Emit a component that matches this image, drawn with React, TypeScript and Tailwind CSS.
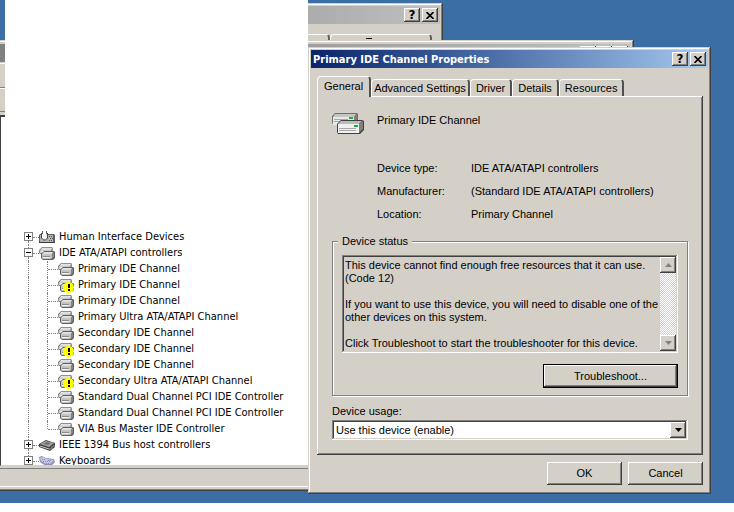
import React from "react";

const windowBevel =
  "bg-[#d4d0c8] shadow-[inset_-1px_-1px_#404040,inset_1px_1px_#d4d0c8,inset_-2px_-2px_#808080,inset_2px_2px_#fff]";
const buttonBevel =
  "bg-[#d4d0c8] shadow-[inset_-1px_-1px_#404040,inset_1px_1px_#fff,inset_-2px_-2px_#808080]";
const sunken =
  "shadow-[inset_-1px_-1px_#fff,inset_1px_1px_#808080,inset_-2px_-2px_#d4d0c8,inset_2px_2px_#404040]";
const tahoma = "font-['DejaVu_Sans_Condensed','DejaVu_Sans',sans-serif]";

function DriveIcon({ warning = false }: { warning?: boolean }) {
  return (
    <svg width="16" height="16" viewBox="0 0 16 16" className="shrink-0 overflow-visible" aria-hidden="true">
      <path d="M2 3l1-1h10l1 1v5l-1 1H1L0 8V5z" fill="#909090" />
      <path d="M3 3h10l-1 2H2z" fill="#e0e0e0" />
      <path d="M1 5h11v3H1z" fill="#c6c6c6" />
      <path d="M2 6.5h3" stroke="#f4f4f4" />
      <path d="M4 7l1-1h10l1 1v6l-2 2H4l-2-2V9z" fill="#606060" />
      <path d="M5 7h9l-1 2H3z" fill="#e0e0e0" />
      <path d="M3 9h10v4l-1 1H4l-1-1z" fill="#c4c4c4" />
      <path d="M13 9l2-2v5l-2 2z" fill="#848484" />
      <path d="M4 11.5h7" stroke="#8c8c8c" />
      <path d="M4 12.500h7" stroke="#f0f0f0" />
      {warning && (
        <g>
          <circle cx="10.500" cy="10.500" r="5.500" fill="#ffff00" />
          <path d="M10 7h2v4h-2zM10 12h2v2h-2z" fill="#000" />
        </g>
      )}
    </svg>
  );
}

function HidIcon() {
  return (
    <svg width="16" height="16" viewBox="0 0 16 16" className="shrink-0" aria-hidden="true">
      <path d="M0 6l1-1h14l1 1v8H0z" fill="#606060" />
      <path d="M1 6h13v7H1z" fill="#b4b4b4" />
      <path d="M3 5h5v4l-1 2H4L3 9z" fill="#f4f4f4" />
      <path d="M2.500 4v5l2 2h2l2-2V4" fill="none" stroke="#404040" />
      <path d="M3.500 2v3M7.500 2v3" stroke="#606060" />
      <path d="M10 7.500h4M11 9.500h4M10 11.500h4" stroke="#505050" strokeDasharray="1 1" />
      <path d="M0 13.500h16" stroke="#404040" />
    </svg>
  );
}

function BusIcon() {
  return (
    <svg width="16" height="16" viewBox="0 0 16 16" className="shrink-0" aria-hidden="true">
      <path d="M0 7l7-4 9 3v4l-5 4-11-4z" fill="#404040" />
      <path d="M1 7l6-3 8 2-5 4z" fill="#a8a8a8" />
      <path d="M4 7l4-2 4 1-3 2z" fill="#707070" />
      <path d="M1 9l9 3" stroke="#c8c8c8" />
      <path d="M11 11v2M13 9v3M15 8v2" stroke="#a0a0a0" />
    </svg>
  );
}

function KeyboardIcon() {
  return (
    <svg width="16" height="16" viewBox="0 0 16 16" className="shrink-0" aria-hidden="true">
      <path d="M0 4l3-1 4 2 8 1 1 3-4 4H7L1 9z" fill="#9090b8" />
      <path d="M1 5l3-1 4 2 7 1-4 4H7L2 8z" fill="#c8c8e8" />
      <path d="M3 6.500h3M4 8.500h8M7 10.500h4M9 7.500h4" stroke="#8484b0" strokeDasharray="1 1" />
    </svg>
  );
}

function BigDriveIcon() {
  return (
    <svg width="32" height="22" viewBox="0 0 32 22" className="shrink-0" aria-hidden="true">
      <path d="M3 0h22l1 1v8H2L0 11V3z" fill="#707070" />
      <path d="M3 1h21l-2 3H1z" fill="#c4c4c4" />
      <path d="M1 4h21v8H1z" fill="#e8e8e8" />
      <path d="M22 4l3-3v8h-3z" fill="#808080" />
      <path d="M2 6.500h14M2 8.500h14" stroke="#a8a8a8" />
      <path d="M17 4h4v2h-4z" fill="#18b030" />
      <path d="M9 7h21l2 1v9l-4 4H6l-1-2v-8z" fill="#404040" />
      <path d="M9 8h21l-3 3H6z" fill="#bcbcbc" />
      <path d="M6 11h21v9H6z" fill="#f0f0f0" />
      <path d="M27 11l4-3v8l-4 4z" fill="#808080" />
      <path d="M7 15.500h17M7 17.500h17" stroke="#a8a8a8" />
      <path d="M22 12h4v2h-4z" fill="#18b030" />
    </svg>
  );
}

function CaptionButtons() {
  return (
    <div className="flex gap-0.5">
      <button
        aria-label="Help"
        className={`flex h-3.5 w-4 items-center justify-center text-xs leading-none font-bold text-black font-['DejaVu_Sans'] ${buttonBevel}`}
      >
        ?
      </button>
      <button aria-label="Close" className={`flex h-3.5 w-4 items-center justify-center ${buttonBevel}`}>
        <svg width="8" height="7" viewBox="0 0 8 7" aria-hidden="true">
          <path d="M.5 0l7 7M7.500 0l-7 7" stroke="#000" strokeWidth="1.600" />
        </svg>
      </button>
    </div>
  );
}

function Branch({ open, first, icon, label }: { open?: boolean; first?: boolean; icon: React.ReactNode; label: string }) {
  return (
    <div className="flex h-4 items-center">
      <span className="ml-6 flex h-4 w-[9px] shrink-0 flex-col items-center">
        <span className={`h-[3px] w-px border-l border-dotted ${first ? "border-transparent" : "border-[#808080]"}`} />
        <button
          aria-label={`${open ? "Collapse" : "Expand"} ${label}`}
          className="flex h-[9px] w-[9px] items-center justify-center border border-[#808080] bg-white"
        >
          <svg width="5" height="5" viewBox="0 0 5 5" aria-hidden="true">
            <path d={open ? "M0 2.500h5" : "M0 2.500h5M2.500 0v5"} stroke="#000" />
          </svg>
        </button>
        <span className="h-1 w-px border-l border-dotted border-[#808080]" />
      </span>
      <span className="w-1.5 shrink-0 border-t border-dotted border-[#808080]" />
      {icon}
      <span className="ml-1">{label}</span>
    </div>
  );
}

function Leaf({ warning, last, label }: { warning?: boolean; last?: boolean; label: string }) {
  return (
    <li className="flex h-4 items-center">
      <span className="h-4 w-[29px] shrink-0 border-r border-dotted border-[#808080]" />
      <span className={`w-[19px] shrink-0 self-start border-r border-dotted border-[#808080] ${last ? "h-2" : "h-4"}`} />
      <span className="w-2.5 shrink-0 border-t border-dotted border-[#808080]" />
      <DriveIcon warning={warning} />
      <span className="ml-1">{label}</span>
    </li>
  );
}

const channels = [
  { label: "Primary IDE Channel" },
  { label: "Primary IDE Channel", warning: true },
  { label: "Primary IDE Channel" },
  { label: "Primary Ultra ATA/ATAPI Channel" },
  { label: "Secondary IDE Channel" },
  { label: "Secondary IDE Channel", warning: true },
  { label: "Secondary IDE Channel" },
  { label: "Secondary Ultra ATA/ATAPI Channel", warning: true },
  { label: "Standard Dual Channel PCI IDE Controller" },
  { label: "Standard Dual Channel PCI IDE Controller" },
  { label: "VIA Bus Master IDE Controller" },
];

function SystemWindow() {
  return (
    <section className={`absolute top-[3px] right-[291px] left-2.5 h-[60px] p-[3px] ${windowBevel}`}>
      <div className="flex h-[18px] items-center justify-end bg-linear-to-r from-[#808080] to-[#c0c0c0] pr-0.5">
        <CaptionButtons />
      </div>
      <div className="mt-2.5 flex justify-end pr-2">
        <div className="h-4 w-24 rounded-t-sm border-t border-r-2 border-t-white border-r-[#606060]" />
        <div className="flex h-4 w-[102px] justify-center rounded-t-sm border-t border-r-2 border-l border-t-white border-r-[#606060] border-l-white pt-[3px] pr-6">
          <span className="h-px w-1.5 bg-black" />
        </div>
      </div>
    </section>
  );
}

function DeviceManager() {
  return (
    <section className={`absolute top-10 right-[100px] bottom-3 -left-1 flex flex-col p-1 ${tahoma} ${windowBevel}`}>
      <div className="flex h-[18px] shrink-0 items-start justify-end bg-linear-to-r from-[#808080] to-[#c0c0c0] pt-0.5 pr-0.5">
        <span className={`h-3.5 w-4 ${buttonBevel}`} />
        <span className={`h-3.5 w-4 ${buttonBevel}`} />
        <span className={`h-3.5 w-4 ${buttonBevel}`} />
      </div>
      <div className="mt-px h-[25px] shrink-0 border-t border-b border-t-white border-b-[#808080]" />
      <div className="h-6 shrink-0 border-t border-b border-t-white border-b-[#808080]" />
      <div className="mt-[3px] min-h-0 flex-1 overflow-hidden border-t-2 border-b border-l border-t-[#404040] border-b-[#d4d0c8] border-l-[#404040] bg-white pt-[112px]">
        <ul className="-ml-px text-[11px] leading-4 whitespace-nowrap text-black">
          <li>
            <Branch first icon={<HidIcon />} label="Human Interface Devices" />
          </li>
          <li>
            <Branch open icon={<DriveIcon />} label="IDE ATA/ATAPI controllers" />
            <ul>
              {channels.map((c, i) => (
                <Leaf key={i} label={c.label} warning={c.warning} last={i === channels.length - 1} />
              ))}
            </ul>
          </li>
          <li>
            <Branch icon={<BusIcon />} label="IEEE 1394 Bus host controllers" />
          </li>
          <li>
            <Branch icon={<KeyboardIcon />} label="Keyboards" />
          </li>
        </ul>
      </div>
      <div className="mt-0.5 h-[19px] shrink-0 border-t border-b border-t-[#808080] border-b-white" />
    </section>
  );
}

function Tab({ children, active, tight }: { children: string; active?: boolean; tight?: boolean }) {
  return (
    <button
      role="tab"
      aria-selected={!!active}
      className={`rounded-t-sm border-t border-r-2 border-l border-t-white border-r-[#505050] border-l-white bg-[#d4d0c8] whitespace-nowrap ${
        active ? "relative -mb-px h-[21px] px-1.5 pb-0.5" : tight ? "h-[17px] px-0.5" : "h-[17px] px-[5px]"
      }`}
    >
      {children}
    </button>
  );
}

const statusText = `This device cannot find enough free resources that it can use.
(Code 12)

If you want to use this device, you will need to disable one of the
other devices on this system.

Click Troubleshoot to start the troubleshooter for this device.`;

function ScrollButton({ label, path }: { label: string; path: string }) {
  return (
    <button aria-label={label} className={`flex h-4 w-4 items-center justify-center ${buttonBevel}`}>
      <svg width="7" height="4" viewBox="0 0 7 4" aria-hidden="true">
        <path d={path} fill="#808080" />
      </svg>
    </button>
  );
}

function PropertiesDialog() {
  const details = [
    ["Device type:", "IDE ATA/ATAPI controllers"],
    ["Manufacturer:", "(Standard IDE ATA/ATAPI controllers)"],
    ["Location:", "Primary Channel"],
  ];
  return (
    <section
      role="dialog"
      aria-labelledby="dialog-title"
      className={`relative mr-[23px] ml-[308px] p-[3px] pb-[9px] text-[11px] leading-[13px] text-black font-['Liberation_Sans',Arial,sans-serif] ${windowBevel}`}
    >
      <header className="flex h-[18px] items-center justify-between bg-linear-to-r from-[#0a246a] to-[#a6caf0] pr-0.5 pl-0.5">
        <h1 id="dialog-title" className={`font-bold whitespace-nowrap text-white ${tahoma}`}>
          Primary IDE Channel Properties
        </h1>
        <CaptionButtons />
      </header>
      <div className="mt-2 mr-[5px] ml-1.5">
        <div role="tablist" className="flex items-end">
          <Tab active>General</Tab>
          <Tab tight>Advanced Settings</Tab>
          <Tab>Driver</Tab>
          <Tab>Details</Tab>
          <Tab>Resources</Tab>
        </div>
        <div
          role="tabpanel"
          className="px-[15px] pt-[17px] pb-[15px] shadow-[inset_-1px_-1px_#404040,inset_1px_1px_#fff,inset_-2px_-2px_#808080]"
        >
          <div className="flex">
            <BigDriveIcon />
            <span className="ml-[13px] pt-px">Primary IDE Channel</span>
          </div>
          <dl className="mt-[27px] ml-[45px] grid grid-cols-[94px_1fr] gap-y-2.5">
            {details.map(([k, v]) => (
              <React.Fragment key={k}>
                <dt>{k}</dt>
                <dd className="whitespace-nowrap">{v}</dd>
              </React.Fragment>
            ))}
          </dl>
          <fieldset className="mt-3.5 border border-[#808080] px-[9px] pb-[7px] shadow-[1px_1px_#fff,inset_1px_1px_#fff]">
            <legend className="-ml-1 bg-[#d4d0c8] px-1">Device status</legend>
            <div className={`mt-[7px] flex h-[98px] p-0.5 ${sunken}`}>
              <textarea
                readOnly
                aria-label="Device status"
                className="h-full min-w-0 flex-1 resize-none overflow-hidden bg-transparent pt-0.5 pl-px leading-[13px] whitespace-pre outline-none"
                value={statusText}
              />
              <div className="flex flex-col justify-between bg-[repeating-conic-gradient(#fff_0_25%,#d4d0c8_0_50%)] bg-[length:2px_2px]">
                <ScrollButton label="Scroll up" path="M0 4h7L3.500 0z" />
                <ScrollButton label="Scroll down" path="M0 0h7L3.500 4z" />
              </div>
            </div>
            <div className="mt-[11px] flex justify-end">
              <button
                className={`h-6 w-[135px] border border-black ${buttonBevel}`}
              >
                Troubleshoot...
              </button>
            </div>
          </fieldset>
          <label htmlFor="usage" className="mt-[9px] block">
            Device usage:
          </label>
          <div className={`mt-0.5 grid grid-cols-[1fr_16px] bg-white p-0.5 ${sunken}`}>
            <select id="usage" className="col-span-2 col-start-1 row-start-1 h-4 appearance-none pl-0.5 outline-none">
              <option>Use this device (enable)</option>
            </select>
            <span
              className={`pointer-events-none col-start-2 row-start-1 flex h-4 items-center justify-center ${buttonBevel}`}
            >
              <svg width="7" height="4" viewBox="0 0 7 4" aria-hidden="true">
                <path d="M0 0h7L3.500 4z" fill="#000" />
              </svg>
            </span>
          </div>
        </div>
        <div className="mt-[7px] flex justify-end gap-1.5">
          <button className={`h-[23px] w-[75px] ${buttonBevel}`}>OK</button>
          <button className={`h-[23px] w-[75px] ${buttonBevel}`}>Cancel</button>
        </div>
      </div>
    </section>
  );
}

export default function App() {
  return (
    <main className="relative overflow-hidden bg-[#3a6ea5] pt-[47px] pb-[9px]">
      <SystemWindow />
      <DeviceManager />
      <div className="absolute top-0 left-[5px] h-[229px] w-[303px] bg-white" />
      <PropertiesDialog />
    </main>
  );
}
